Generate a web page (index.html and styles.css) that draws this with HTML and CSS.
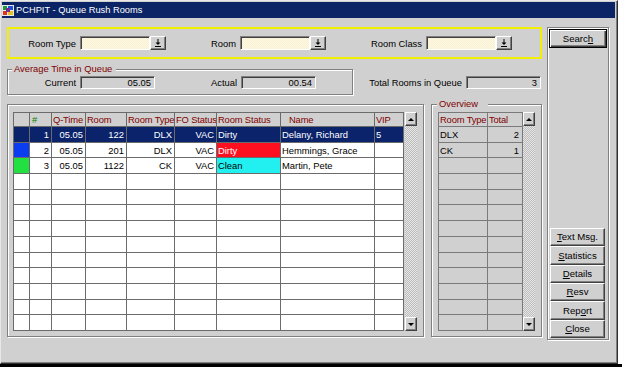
FILE: index.html
```html
<!DOCTYPE html>
<html>
<head>
<meta charset="utf-8">
<link rel="stylesheet" href="styles.css">
</head>
<body>
<div class="window">
  <div class="titlebar">
    <svg class="appicon" viewBox="0 0 12 12" width="12" height="12">
      <rect x="0" y="1" width="12" height="11" fill="#e8e8e8"/>
      <rect x="1" y="2" width="4" height="4" fill="#1a9a3a"/>
      <rect x="6" y="2" width="5" height="4" fill="#2050e0"/>
      <rect x="1" y="7" width="4" height="4" fill="#e03020"/>
      <rect x="6" y="7" width="5" height="4" fill="#e8c020"/>
      <rect x="4" y="4" width="4" height="4" fill="#7a2a8a"/>
    </svg>
    <span class="title">PCHPIT - Queue Rush Rooms</span>
  </div>

  <div class="content">
    <div class="main">
      <div class="filters">
        <span class="lbl l-rtype">Room Type</span>
        <span class="field cream"></span>
        <span class="dd"><svg viewBox="0 0 6 8" width="6" height="8"><rect x="2.5" y="0" width="1" height="4" fill="#000"/><path d="M0.5 3.5 H5.5 L3 6 Z" fill="#000"/><rect x="0" y="7" width="6" height="1" fill="#000"/></svg></span>
        <span class="lbl l-room">Room</span>
        <span class="field cream"></span>
        <span class="dd"><svg viewBox="0 0 6 8" width="6" height="8"><rect x="2.5" y="0" width="1" height="4" fill="#000"/><path d="M0.5 3.5 H5.5 L3 6 Z" fill="#000"/><rect x="0" y="7" width="6" height="1" fill="#000"/></svg></span>
        <span class="lbl l-class">Room Class</span>
        <span class="field cream"></span>
        <span class="dd"><svg viewBox="0 0 6 8" width="6" height="8"><rect x="2.5" y="0" width="1" height="4" fill="#000"/><path d="M0.5 3.5 H5.5 L3 6 Z" fill="#000"/><rect x="0" y="7" width="6" height="1" fill="#000"/></svg></span>
      </div>

      <div class="stats">
        <div class="group avg">
          <div class="legend">Average Time in Queue</div>
          <div class="avg-row">
            <span class="lbl l-cur">Current</span>
            <span class="field ro w75">05.05</span>
            <span class="lbl l-act">Actual</span>
            <span class="field ro w75">00.54</span>
          </div>
        </div>
        <span class="lbl l-total">Total Rooms in Queue</span>
        <span class="field ro w75">3</span>
      </div>

      <div class="lists">
        <div class="group grid-group">
          <table class="grid">
            <thead>
              <tr>
                <th class="c-mk"></th>
                <th class="c-no green">#</th>
                <th class="c-qt">Q-Time</th>
                <th class="c-rm">Room</th>
                <th class="c-rt">Room Type</th>
                <th class="c-fo">FO Status</th>
                <th class="c-rs">Room Status</th>
                <th class="c-nm name-h">Name</th>
                <th class="c-vip">VIP</th>
              </tr>
            </thead>
            <tbody>
              <tr class="sel">
                <td></td><td class="r">1</td><td class="r">05.05</td><td class="r">122</td><td class="r">DLX</td><td class="r">VAC</td><td class="l">Dirty</td><td class="l nm">Delany, Richard</td><td class="l">5</td>
              </tr>
              <tr>
                <td class="mk-blue"></td><td class="r">2</td><td class="r">05.05</td><td class="r">201</td><td class="r">DLX</td><td class="r">VAC</td><td class="l st-dirty">Dirty</td><td class="l nm">Hemmings, Grace</td><td></td>
              </tr>
              <tr>
                <td class="mk-green"></td><td class="r">3</td><td class="r">05.05</td><td class="r">1122</td><td class="r">CK</td><td class="r">VAC</td><td class="l st-clean">Clean</td><td class="l nm">Martin, Pete</td><td></td>
              </tr>
              <tr><td></td><td></td><td></td><td></td><td></td><td></td><td></td><td class="nm"></td><td></td></tr>
              <tr><td></td><td></td><td></td><td></td><td></td><td></td><td></td><td class="nm"></td><td></td></tr>
              <tr><td></td><td></td><td></td><td></td><td></td><td></td><td></td><td class="nm"></td><td></td></tr>
              <tr><td></td><td></td><td></td><td></td><td></td><td></td><td></td><td class="nm"></td><td></td></tr>
              <tr><td></td><td></td><td></td><td></td><td></td><td></td><td></td><td class="nm"></td><td></td></tr>
              <tr><td></td><td></td><td></td><td></td><td></td><td></td><td></td><td class="nm"></td><td></td></tr>
              <tr><td></td><td></td><td></td><td></td><td></td><td></td><td></td><td class="nm"></td><td></td></tr>
              <tr><td></td><td></td><td></td><td></td><td></td><td></td><td></td><td class="nm"></td><td></td></tr>
              <tr><td></td><td></td><td></td><td></td><td></td><td></td><td></td><td class="nm"></td><td></td></tr>
              <tr><td></td><td></td><td></td><td></td><td></td><td></td><td></td><td class="nm"></td><td></td></tr>
            </tbody>
          </table>
          <div class="vscroll">
            <span class="sb-btn"><span class="arr-up"></span></span>
            <span class="sb-track"></span>
            <span class="sb-btn"><span class="arr-down"></span></span>
          </div>
        </div>

        <div class="group ov-group">
          <div class="legend ov-legend">Overview</div>
          <div class="ov-body">
            <table class="grid ov">
              <thead>
                <tr><th class="o-rt">Room Type</th><th class="o-tot">Total</th></tr>
              </thead>
              <tbody>
                <tr><td class="l">DLX</td><td class="r">2</td></tr>
                <tr><td class="l">CK</td><td class="r">1</td></tr>
                <tr><td></td><td></td></tr>
                <tr><td></td><td></td></tr>
                <tr><td></td><td></td></tr>
                <tr><td></td><td></td></tr>
                <tr><td></td><td></td></tr>
                <tr><td></td><td></td></tr>
                <tr><td></td><td></td></tr>
                <tr><td></td><td></td></tr>
                <tr><td></td><td></td></tr>
                <tr><td></td><td></td></tr>
                <tr><td></td><td></td></tr>
              </tbody>
            </table>
            <div class="vscroll">
              <span class="sb-btn"><span class="arr-up"></span></span>
              <span class="sb-track"></span>
              <span class="sb-btn"><span class="arr-down"></span></span>
            </div>
          </div>
        </div>
      </div>
    </div>

    <div class="side">
      <button class="btn default">Searc<u>h</u></button>
      <div class="spacer"></div>
      <div class="btn-stack">
        <button class="btn"><u>T</u>ext Msg.</button>
        <button class="btn"><u>S</u>tatistics</button>
        <button class="btn"><u>D</u>etails</button>
        <button class="btn"><u>R</u>esv</button>
        <button class="btn">Rep<u>o</u>rt</button>
        <button class="btn"><u>C</u>lose</button>
      </div>
    </div>
  </div>
</div>
<div class="strip"></div>
</body>
</html>
```

FILE: styles.css
```css
* { box-sizing: border-box; }
html, body { margin: 0; padding: 0; }
body {
  width: 622px;
  height: 367px;
  overflow: hidden;
  background: #ffffff;
  font-family: "Liberation Sans", Arial, sans-serif;
  font-size: 9.4px;
  color: #000;
}

.window {
  width: 618px;
  height: 364px;
  background: #d0d0d0;
  border-top: 1px solid #e8e8e8;
  border-left: 1px solid #e8e8e8;
  border-right: 1px solid #303030;
  border-bottom: 1px solid #303030;
  box-shadow: inset -1px -1px 0 #808080;
  padding: 1px;
  display: flex;
  flex-direction: column;
}

.strip { height: 3px; background: #000; }

.titlebar {
  height: 16px;
  background: #0a2466;
  color: #fff;
  display: flex;
  align-items: center;
  margin-right: 1px;
}
.appicon { display: block; margin: 0 1px 0 0; }
.title { font-size: 9.3px; line-height: 14px; padding-left: 1px; }

.content {
  display: flex;
  align-items: flex-start;
  padding: 9px 0 0 5px;
}
.main {
  width: 535px;
  display: flex;
  flex-direction: column;
}

/* labels & fields */
.lbl { display: inline-block; white-space: nowrap; line-height: 13px; text-align: right; }
.field {
  display: inline-block;
  height: 13px;
  border-top: 1px solid #808080;
  border-left: 1px solid #808080;
  border-bottom: 1px solid #ffffff;
  border-right: 1px solid #ffffff;
  box-shadow: inset 1px 1px 0 #404040;
  text-align: right;
  padding: 0 3px 0 0;
  line-height: 11px;
  white-space: nowrap;
}
.field.ro { background: #d0d0d0; }
.w75 { width: 75px; }
.field.cream {
  width: 70px;
  height: 14px;
  background-color: #fcf6dc;
  background-image: repeating-conic-gradient(#fdf9e6 0 25%, #f8f0cf 0 50%);
  background-size: 2px 2px;
}
.dd {
  width: 16px;
  height: 14px;
  background: #d0d0d0;
  border-top: 1px solid #ffffff;
  border-left: 1px solid #ffffff;
  border-right: 1px solid #404040;
  border-bottom: 1px solid #404040;
  box-shadow: inset -1px -1px 0 #808080;
  display: flex;
  align-items: center;
  justify-content: center;
  padding-bottom: 1px;
}
.dd svg { display: block; }

.filters {
  height: 32px;
  border: 2px solid #f0f000;
  display: flex;
  align-items: center;
}
.l-rtype { width: 67px; margin-right: 4px; }
.l-room { width: 70px; margin-right: 4px; }
.l-class { width: 96px; margin-right: 4px; }

/* group boxes */
.group {
  border: 1px solid #808080;
  box-shadow: inset 1px 1px 0 #ffffff, 1px 1px 0 #ffffff;
}
.legend {
  align-self: flex-start;
  color: #800000;
  background: #d0d0d0;
  line-height: 12px;
  height: 12px;
  margin: -7px 0 -5px 4px;
  padding: 0 4px 0 2px;
  white-space: nowrap;
}

.stats {
  display: flex;
  align-items: center;
  margin-top: 10px;
}
.avg {
  width: 346px;
  height: 26px;
  display: flex;
  flex-direction: column;
}
.avg-row {
  flex: 1;
  display: flex;
  align-items: center;
}
.l-cur { width: 68px; margin-right: 4px; }
.l-act { width: 82px; margin-right: 4px; }
.l-total { width: 109px; margin-right: 4px; }

.lists {
  display: flex;
  gap: 7px;
  margin-top: 9px;
}
.grid-group {
  width: 417px;
  height: 233px;
  display: flex;
  align-items: flex-start;
  padding: 7px 0 0 5px;
}
.ov-group {
  width: 111px;
  height: 233px;
  display: flex;
  flex-direction: column;
}
.ov-legend { margin-left: 5px; padding-right: 10px; }
.ov-body {
  display: flex;
  align-items: flex-start;
  padding: 7px 0 0 6px;
}

/* tables */
.grid {
  border-collapse: separate;
  border-spacing: 0;
  table-layout: fixed;
  width: 391px;
  border-top: 1px solid #6b6b6b;
  border-left: 1px solid #6b6b6b;
  background: #ffffff;
}
.grid th, .grid td {
  border-right: 1px solid #6b6b6b;
  border-bottom: 1px solid #6b6b6b;
  padding: 0 2px;
  height: 15.7px;
  line-height: 13px;
  white-space: nowrap;
  overflow: hidden;
  font-weight: normal;
  vertical-align: middle;
}
.grid th {
  height: 14px;
  background: #d0d0d0;
  color: #800000;
  text-align: left;
  padding: 0 0 0 1px;
  letter-spacing: -0.15px;
}
.grid th.green { color: #008000; padding-left: 2px; }
.grid th.name-h { padding-left: 8px; }
.c-mk { width: 16px; }
.c-no { width: 22px; }
.c-qt { width: 34px; }
.c-rm { width: 41px; }
.c-rt { width: 48px; }
.c-fo { width: 42px; }
.c-rs { width: 64px; }
.c-nm { width: 94px; }
.c-vip { width: 29px; }
.grid td.r { text-align: right; padding-right: 2px; }
.grid td.l { text-align: left; padding-left: 1px; }
.grid tr.sel td { background: #0a236b; color: #ffffff; }
.mk-blue { background: #0a3cf0; }
.mk-green { background: #22e040; }
.grid td.st-dirty { background: #ff1020; color: #ffffff; }
.grid td.st-clean { background: #22f0f0; color: #000; }

.grid.ov {
  width: 85px;
  background: #d0d0d0;
  border-top-color: #7a7a7a;
  border-left-color: #7a7a7a;
}
.grid.ov th, .grid.ov td { border-color: #7a7a7a; }
.o-rt { width: 49px; }
.o-tot { width: 35px; }
.grid.ov td.r { padding-right: 3px; }

/* scrollbars */
.vscroll {
  width: 12px;
  height: 219px;
  margin-left: 1px;
  display: flex;
  flex-direction: column;
}
.ov-body .vscroll { margin-left: 0; }
.sb-btn {
  height: 14px;
  background: #d0d0d0;
  border-top: 1px solid #ffffff;
  border-left: 1px solid #ffffff;
  border-right: 1px solid #404040;
  border-bottom: 1px solid #404040;
  box-shadow: inset -1px -1px 0 #808080;
  display: flex;
  align-items: center;
  justify-content: center;
}
.sb-track {
  flex: 1;
  background-image: repeating-conic-gradient(#e6e6e6 0 25%, #bdbdbd 0 50%);
  background-size: 2px 2px;
}
.arr-up {
  width: 0; height: 0;
  border-left: 3px solid transparent;
  border-right: 3px solid transparent;
  border-bottom: 3px solid #000;
}
.arr-down {
  width: 0; height: 0;
  border-left: 3px solid transparent;
  border-right: 3px solid transparent;
  border-top: 3px solid #000;
}

/* side panel */
.side {
  width: 62px;
  height: 313px;
  margin-left: 5px;
  border: 1px solid #808080;
  box-shadow: inset 1px 1px 0 #ffffff, 1px 1px 0 #ffffff;
  padding: 1px 1px 1px 2px;
  display: flex;
  flex-direction: column;
}
.spacer { flex: 1; }
.btn {
  font: inherit;
  font-size: 9.6px;
  color: #000;
  margin: 0;
  padding: 0;
  background: #d0d0d0;
  border-top: 1px solid #ffffff;
  border-left: 1px solid #ffffff;
  border-right: 1px solid #404040;
  border-bottom: 1px solid #404040;
  box-shadow: inset -1px -1px 0 #808080;
  text-align: center;
  line-height: 14px;
  white-space: nowrap;
}
.btn.default {
  width: 58px;
  height: 19px;
  margin-left: -1px;
  border: 1px solid #000;
  box-shadow: inset 1px 1px 0 #ffffff, inset -1px -1px 0 #404040, inset -2px -2px 0 #808080;
}
.btn-stack {
  display: flex;
  flex-direction: column;
}
.btn-stack .btn {
  width: 55px;
  height: 18.33px;
}
```
